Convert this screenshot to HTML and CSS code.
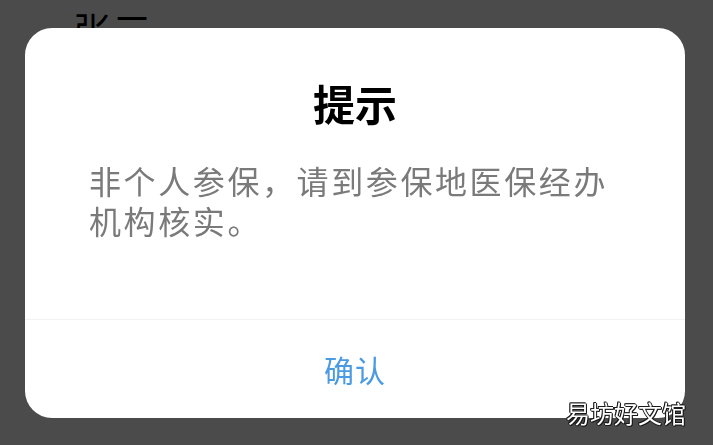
FILE: index.html
```html
<!DOCTYPE html>
<html lang="zh-CN">
<head>
<meta charset="utf-8">
<title>提示</title>
<link rel="stylesheet" href="styles.css">
</head>
<body>
<div class="page">
  <div class="page-name">张三</div>
</div>
<div class="mask">
  <div class="dialog">
    <div class="dialog-body">
      <div class="dialog-title">提示</div>
      <div class="dialog-text">非个人参保，请到参保地医保经办机构核实。</div>
    </div>
    <div class="dialog-footer">
      <span class="dialog-btn">确认</span>
    </div>
  </div>
</div>
<div class="watermark">易坊好文馆</div>
</body>
</html>
```
FILE: styles.css
```css
html, body {
  margin: 0;
  padding: 0;
  width: 713px;
  height: 445px;
  overflow: hidden;
  font-family: "Noto Sans CJK SC", "Noto Sans", sans-serif;
}
.page {
  width: 713px;
  height: 445px;
  background: #ffffff;
  box-sizing: border-box;
  padding: 6px 0 0 73px;
}
.page-name {
  font-size: 38px;
  line-height: 46px;
  color: #000;
  letter-spacing: 2px;
}
.mask {
  position: fixed;
  inset: 0;
  background: rgba(0, 0, 0, 0.705);
  display: flex;
  align-items: center;
  justify-content: center;
}
.dialog {
  width: 660px;
  height: 390px;
  margin-right: 3px;
  background: #ffffff;
  border-radius: 27px;
  display: flex;
  flex-direction: column;
  overflow: hidden;
}
.dialog-body {
  flex: 1;
  padding-top: 54px;
  border-bottom: 1px solid #f2f2f2;
}
.dialog-title {
  font-size: 42px;
  line-height: 42px;
  font-weight: 700;
  color: #000;
  text-align: center;
}
.dialog-text {
  margin-top: 36px;
  padding: 0 70px 0 64px;
  font-size: 32px;
  line-height: 40px;
  letter-spacing: 2.6px;
  color: #7a7a7a;
}
.dialog-footer {
  height: 98px;
  display: flex;
  align-items: center;
  justify-content: center;
}
.dialog-btn {
  font-size: 30px;
  line-height: 30px;
  color: #4a9be2;
  letter-spacing: 1px;
}
.watermark {
  position: absolute;
  right: 27px;
  bottom: 18px;
  font-size: 24px;
  line-height: 28px;
  color: #ffffff;
  text-shadow: -1px 0 #1a1a1a, 1px 0 #1a1a1a, 0 -1px #1a1a1a, 0 1px #1a1a1a, 1px 1px #1a1a1a, -1px -1px #1a1a1a;
}
```
